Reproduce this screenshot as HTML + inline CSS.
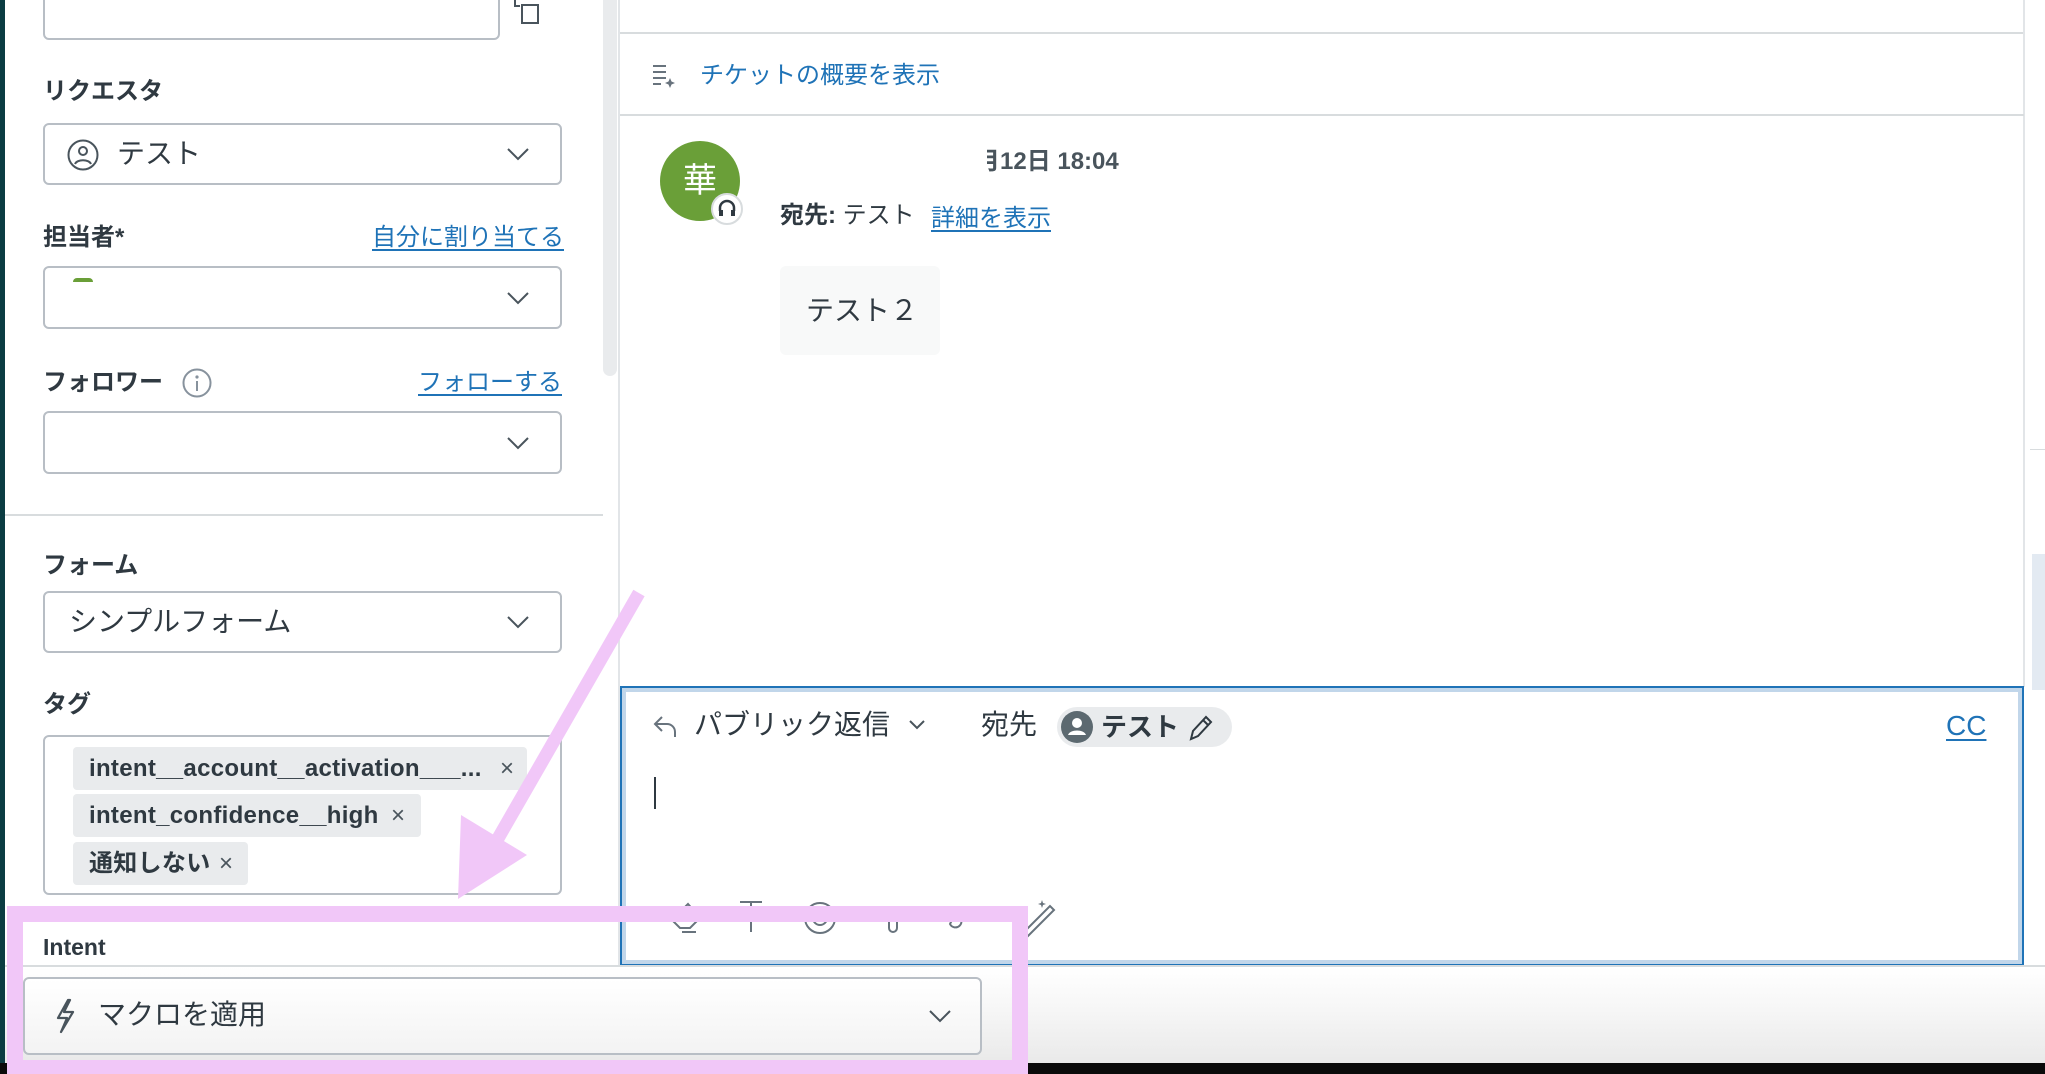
<!DOCTYPE html>
<html><head><meta charset="utf-8"><style>
*{margin:0;padding:0;box-sizing:border-box}
body{width:2045px;height:1074px;overflow:hidden;background:#fff;position:relative;font-family:"Liberation Sans","Noto Sans CJK JP",sans-serif;color:#2f3941}
.a{position:absolute}
.lbl{position:absolute;left:43px;font-size:24px;font-weight:700;color:#2f3941;line-height:30px}
.link{position:absolute;font-size:24px;color:#1f73b7;text-decoration:underline;text-underline-offset:4px;line-height:30px}
.sel{position:absolute;left:43px;width:519px;border:2px solid #b8bec5;border-radius:6px;background:#fff}
.chev{position:absolute;right:30px;top:50%;margin-top:-8px}
.chip{position:absolute;left:73px;height:43px;background:#e9ebed;border-radius:4px;font-size:24px;font-weight:600;color:#2f3941;line-height:43px;padding-left:16px;letter-spacing:0.3px}
.x{position:absolute;font-weight:400;color:#49545c}
</style></head><body>
<div class="a" style="left:0;top:0;width:5px;height:1074px;background:#0b3c42"></div>
<div class="a" style="left:43px;top:-10px;width:457px;height:50px;border:2px solid #b8bec5;border-radius:6px"></div>
<svg class="a" style="left:512px;top:0" width="40" height="28"><path d="M3 0v6h5" fill="none" stroke="#49545c" stroke-width="2"/><rect x="10" y="5" width="16" height="18" fill="none" stroke="#49545c" stroke-width="2"/></svg>
<div class="a" style="left:603px;top:0;width:14px;height:376px;background:#e9ebed;border-radius:0 0 7px 7px"></div>
<div class="a" style="left:618px;top:0;width:2px;height:966px;background:#e2e5e8"></div>

<div class="lbl" style="top:77px">リクエスタ</div>
<div class="sel" style="top:123px;height:62px">
<svg class="a" style="left:22px;top:14px" width="32" height="32" viewBox="0 0 32 32"><circle cx="16" cy="16" r="14.5" fill="none" stroke="#49545c" stroke-width="2"/><circle cx="16" cy="12" r="4" fill="none" stroke="#49545c" stroke-width="2"/><path d="M8 25c2-5 14-5 16 0" fill="none" stroke="#49545c" stroke-width="2"/></svg>
<span class="a" style="left:72px;top:11px;font-size:28px;line-height:36px">テスト</span>
<svg class="chev" width="24" height="16"><path d="M2 3l10 10 10-10" fill="none" stroke="#49545c" stroke-width="2"/></svg></div>

<div class="lbl" style="top:223px">担当者*</div>
<div class="link" style="left:372px;top:223px">自分に割り当てる</div>
<div class="sel" style="top:266px;height:63px">
<div class="a" style="left:28px;top:10px;width:20px;height:4px;background:#6a9f38;border-radius:10px 10px 0 0"></div>
<svg class="chev" width="24" height="16"><path d="M2 3l10 10 10-10" fill="none" stroke="#49545c" stroke-width="2"/></svg></div>

<div class="lbl" style="top:368px">フォロワー</div>
<svg class="a" style="left:182px;top:368px" width="30" height="30"><circle cx="15" cy="15" r="13.5" fill="none" stroke="#87929d" stroke-width="2"/><circle cx="15" cy="9" r="1.6" fill="#87929d"/><path d="M15 13v10" stroke="#87929d" stroke-width="2"/></svg>
<div class="link" style="left:418px;top:368px">フォローする</div>
<div class="sel" style="top:411px;height:63px">
<svg class="chev" width="24" height="16"><path d="M2 3l10 10 10-10" fill="none" stroke="#49545c" stroke-width="2"/></svg></div>

<div class="a" style="left:5px;top:514px;width:598px;height:2px;background:#d8dcde"></div>

<div class="lbl" style="top:551px">フォーム</div>
<div class="sel" style="top:591px;height:62px">
<span class="a" style="left:24px;top:11px;font-size:28px;line-height:36px">シンプルフォーム</span>
<svg class="chev" width="24" height="16"><path d="M2 3l10 10 10-10" fill="none" stroke="#49545c" stroke-width="2"/></svg></div>

<div class="lbl" style="top:690px">タグ</div>
<div class="sel" style="top:735px;height:160px"></div>
<div class="chip" style="top:747px;width:454px">intent__account__activation___...<span class="x" style="left:427px">×</span></div>
<div class="chip" style="top:794px;width:348px">intent_confidence__high<span class="x" style="left:318px">×</span></div>
<div class="chip" style="top:842px;width:175px">通知しない<span class="x" style="left:146px">×</span></div>

<div class="lbl" style="top:932px;font-size:23px">Intent</div>

<div class="a" style="left:620px;top:32px;width:1404px;height:2px;background:#d8dcde"></div>
<div class="a" style="left:2023px;top:0;width:2px;height:687px;background:#e2e5e8"></div>
<div class="a" style="left:2032px;top:554px;width:13px;height:136px;background:#e3eaf2"></div>
<div class="a" style="left:2030px;top:449px;width:15px;height:1px;background:#d8dcde"></div>
<svg class="a" style="left:652px;top:63px" width="24" height="26"><path d="M1 3h13M1 9h13M1 15h13M1 21h8" stroke="#68737d" stroke-width="2"/><path d="M18 15l1.5 3.5 3.5 1.5-3.5 1.5-1.5 3.5-1.5-3.5-3.5-1.5 3.5-1.5z" fill="#68737d"/></svg>
<div class="a" style="left:700px;top:61px;font-size:24px;color:#1f73b7;line-height:30px">チケットの概要を表示</div>
<div class="a" style="left:620px;top:114px;width:1404px;height:2px;background:#d8dcde"></div>

<div class="a" style="left:660px;top:141px;width:80px;height:80px;border-radius:50%;background:#6a9f38;color:#fff;font-size:34px;text-align:center;line-height:80px">華</div>
<div class="a" style="left:711px;top:193px;width:32px;height:32px;border-radius:50%;background:#fff;border:2px solid #d8dcde"></div>
<svg class="a" style="left:716px;top:198px" width="22" height="22"><path d="M4 13v-3a7 7 0 0 1 14 0v3" fill="none" stroke="#2f3941" stroke-width="2.5"/><rect x="3" y="12" width="4" height="6" fill="#2f3941"/><rect x="15" y="12" width="4" height="6" fill="#2f3941"/></svg>
<div class="a" style="left:976px;top:147px;font-size:24px;font-weight:700;color:#49545c;line-height:30px">月12日 18:04</div>
<div class="a" style="left:958px;top:145px;width:29px;height:34px;background:#fff"></div>
<div class="a" style="left:780px;top:201px;font-size:24px;line-height:30px;color:#2f3941"><b>宛先:</b> テスト</div>
<div class="link" style="left:931px;top:204px">詳細を表示</div>
<div class="a" style="left:780px;top:266px;width:160px;height:89px;background:#f8f9f9;border-radius:6px;font-size:28px;line-height:89px;padding-left:26px;color:#2f3941">テスト２</div>

<div class="a" style="left:620px;top:686px;width:1404px;height:280px;border:2px solid #1f73b7;box-shadow:inset 0 0 0 4px #c1d6ea"></div>
<svg class="a" style="left:652px;top:714px" width="28" height="26"><path d="M10 3L3 10l7 7M3 10h12a8 8 0 0 1 8 8v5" fill="none" stroke="#68737d" stroke-width="2"/></svg>
<div class="a" style="left:694px;top:707px;font-size:28px;line-height:36px;color:#2f3941">パブリック返信</div>
<svg class="a" style="left:908px;top:719px" width="18" height="12"><path d="M2 2l7 7 7-7" fill="none" stroke="#49545c" stroke-width="2"/></svg>
<div class="a" style="left:981px;top:707px;font-size:28px;line-height:36px;color:#2f3941">宛先</div>
<div class="a" style="left:1057px;top:707px;width:175px;height:40px;border-radius:20px;background:#e9ebed"></div>
<svg class="a" style="left:1061px;top:711px" width="32" height="32"><circle cx="16" cy="16" r="16" fill="#5c6970"/><circle cx="16" cy="12" r="5" fill="#fff"/><path d="M7 24c2-6 16-6 18 0z" fill="#fff"/></svg>
<div class="a" style="left:1101px;top:710px;font-size:26px;font-weight:700;line-height:34px;color:#2f3941">テスト</div>
<svg class="a" style="left:1187px;top:713px" width="28" height="30"><path d="M4 26l2-8L19 4l5 5-13 14z M16 7l5 5" fill="none" stroke="#2f3941" stroke-width="2"/></svg>
<div class="link" style="left:1946px;top:711px;font-size:28px">CC</div>
<div class="a" style="left:654px;top:777px;width:2px;height:32px;background:#2f3941"></div>
<svg class="a" style="left:660px;top:898px" width="400" height="42">
<g fill="none" stroke="#68737d" stroke-width="2">
<path d="M28 6l-16 16 8 8h10l10-10z M22 34h14"/>
<path d="M80 4h22 M91 4v30"/>
<circle cx="160" cy="20" r="15"/><circle cx="160" cy="20" r="7"/>
<path d="M229 10v20a4 4 0 0 0 8 0V8"/>
<path d="M300 14a6 6 0 1 0-8 8l-2 4a6 6 0 1 0 8-8"/>
<path d="M360 38L390 8l4 4-30 30z"/></g>
<path d="M382 2l1 3 3 1-3 1-1 3-1-3-3-1 3-1z" fill="#68737d"/></svg>

<div class="a" style="left:5px;top:965px;width:2040px;height:2px;background:#d8dcde"></div>
<div class="a" style="left:5px;top:967px;width:2040px;height:97px;background:linear-gradient(#fff,#f7f7f7 40%,#e9e9e9)"></div>
<div class="a" style="left:0;top:1063px;width:2045px;height:11px;background:#0a0a0a"></div>
<div class="a" style="left:23px;top:977px;width:959px;height:78px;border:2px solid #b8bec5;border-radius:6px;background:linear-gradient(#fff,#f3f3f3)"></div>
<svg class="a" style="left:52px;top:998px" width="26" height="36"><path d="M16 2L6 20h9l-6 14 12-20h-9l6-12z" fill="none" stroke="#49545c" stroke-width="2.2" stroke-linejoin="round"/></svg>
<div class="a" style="left:98px;top:997px;font-size:28px;line-height:36px;color:#2f3941">マクロを適用</div>
<svg class="a" style="left:928px;top:1008px" width="24" height="16"><path d="M2 3l10 10 10-10" fill="none" stroke="#49545c" stroke-width="2"/></svg>

<div class="a" style="left:7px;top:906px;width:1021px;height:168px;border:solid #f1c7f8;border-width:16px 16px 14px 16px"></div>
<svg class="a" style="left:0;top:0" width="2045" height="1074"><path d="M639 593L496 842" stroke="#f1c7f8" stroke-width="13"/><path d="M461 815L527 855L458 899z" fill="#f1c7f8"/></svg>
</body></html>
